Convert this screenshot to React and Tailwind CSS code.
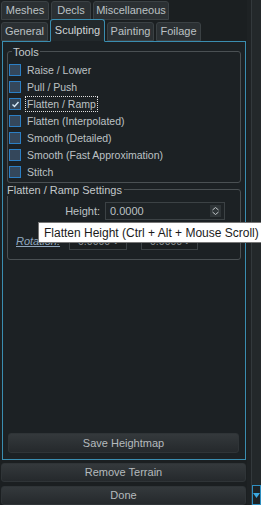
import React from 'react';

const tools = [
  'Raise / Lower',
  'Pull / Push',
  'Flatten / Ramp',
  'Flatten (Interpolated)',
  'Smooth (Detailed)',
  'Smooth (Fast Approximation)',
  'Stitch',
];

const Tab = ({ label, width, active }) => (
  <div
    className={`flex items-center justify-center rounded-t-[3px] border text-[11px] ${
      active
        ? 'h-[23px] -mb-px border-[#3a8db0] border-b-[#1c2124] bg-[#22282b] text-[#d0d4d6] z-10'
        : 'h-[19px] border-[#3b4144] bg-[#2b3033] text-[#bcc1c4]'
    }`}
    style={{ width }}
  >
    {label}
  </div>
);

const Checkbox = ({ checked }) => (
  <div className="w-[12px] h-[12px] border border-[#2c7fc4] bg-[#34475b] flex items-center justify-center shrink-0">
    {checked && (
      <svg width="9" height="9" viewBox="0 0 9 9">
        <path d="M1.5 4.5 L3.5 6.5 L7.5 2" stroke="#d8eaf8" strokeWidth="1.4" fill="none" />
      </svg>
    )}
  </div>
);

const Button = ({ label, className }) => (
  <div
    className={`flex items-center justify-center rounded-[3px] border border-[#2f3437] bg-gradient-to-b from-[#34393c] to-[#25292c] text-[11px] text-[#b5babd] ${className}`}
  >
    {label}
  </div>
);

const SmallInput = ({ className }) => (
  <div className={`h-[17px] border border-[#3c4245] bg-[#1a1e20] flex items-center justify-between pl-[8px] pr-[6px] ${className}`}>
    <span className="text-[10.5px] text-[#8d9396]">0.0000</span>
    <span className="text-[9px] text-[#8d9396]">⌄</span>
  </div>
);

export default function App() {
  return (
    <div
      className="relative w-[261px] h-[505px] overflow-hidden bg-[#1b1f21] flex"
      style={{ fontFamily: '"Liberation Sans", Arial, sans-serif' }}
    >
      {/* main column */}
      <div className="w-[247px] flex flex-col">
        <div className="flex gap-[2px] pl-[1px] pt-[1px]">
          <Tab label="Meshes" width={48} />
          <Tab label="Decls" width={40} />
          <Tab label="Miscellaneous" width={76} />
        </div>
        <div className="flex items-end gap-[2px] pl-[1px] mt-[-2px] h-[23px]">
          <Tab label="General" width={47} />
          <Tab label="Sculpting" width={55} active />
          <Tab label="Painting" width={47} />
          <Tab label="Foilage" width={45} />
        </div>

        {/* panel */}
        <div className="ml-[2px] w-[244px] h-[421px] border border-[#3a8db0] bg-[#1c2124] flex flex-col px-[4px]">
          {/* Tools group */}
          <fieldset className="mt-[4px] border border-[#4a5053] rounded-[3px] px-[1px] h-[137px]">
            <legend className="ml-[3px] px-[1px] text-[11px] text-[#c3c8ca] leading-[12px]">Tools</legend>
            <div className="flex flex-col pt-[4px]">
              {tools.map((t, i) => (
                <div key={t} className="flex items-center h-[17px] gap-[5px]">
                  <Checkbox checked={i === 2} />
                  <span
                    className={`text-[10.5px] leading-[14px] text-[#bcc1c4] px-[1px] ${
                      i === 2 ? 'outline outline-1 outline-dotted outline-[#e0e0e0]' : ''
                    }`}
                  >
                    {t}
                  </span>
                </div>
              ))}
            </div>
          </fieldset>

          {/* Flatten / Ramp settings */}
          <fieldset className="mt-[1px] border border-[#4a5053] rounded-[3px] h-[76px]">
            <legend className="ml-[-1px] pr-[2px] text-[11px] text-[#c3c8ca] leading-[12px]">
              Flatten / Ramp Settings
            </legend>
            <div className="flex items-center mt-[6px] h-[18px]">
              <span className="w-[92px] text-right text-[11px] text-[#bcc1c4]">Height:</span>
              <div className="ml-[5px] w-[120px] h-[18px] border border-[#3c4245] bg-[#1e2326] flex items-center justify-between pl-[4px] pr-[3px]">
                <span className="text-[11px] text-[#bcc1c4]">0.0000</span>
                <div className="w-[11px] h-[12px] bg-[#2f3538] flex items-center justify-center">
                  <svg width="9" height="10" viewBox="0 0 9 10">
                    <path d="M1.5 4 L4.5 1.5 L7.5 4 M1.5 6 L4.5 8.5 L7.5 6" stroke="#c0c5c8" strokeWidth="1" fill="none" />
                  </svg>
                </div>
              </div>
            </div>
            <div className="flex items-center mt-[13px] h-[17px]">
              <span className="ml-[8px] text-[11px] italic underline text-[#8fa6bd]">Rotation:</span>
              <SmallInput className="ml-[9px] w-[58px]" />
              <SmallInput className="ml-[14px] w-[57px]" />
            </div>
          </fieldset>

          <div className="flex-1" />
          <Button label="Save Heightmap" className="h-[20px] mb-[6px] ml-[1px] w-[231px]" />
        </div>

        <Button label="Remove Terrain" className="h-[19px] mt-[3px] ml-[1px] w-[245px]" />
        <Button label="Done" className="h-[19px] mt-[4px] ml-[1px] w-[245px]" />
      </div>

      {/* scrollbar strip */}
      <div className="w-[14px] flex">
        <div className="w-[5px] bg-[#1e2224]" />
        <div className="flex-1 border-l border-[#33393c] bg-[#23282a] flex flex-col justify-end">
          <div className="h-[20px] border border-[#2f8fc0] bg-[#1d2225] flex items-start justify-center pt-[7px]">
            <svg width="7" height="5" viewBox="0 0 7 5">
              <path d="M0 0 L7 0 L3.5 5 Z" fill="#3aa8e0" />
            </svg>
          </div>
        </div>
      </div>

      {/* tooltip */}
      <div className="absolute left-[38px] top-[222px] h-[21px] pl-[5px] pr-[4px] flex items-center bg-white border border-[#767676] text-[12px] text-[#1a1a1a] whitespace-nowrap">
        Flatten Height (Ctrl + Alt + Mouse Scroll)
      </div>
    </div>
  );
}
